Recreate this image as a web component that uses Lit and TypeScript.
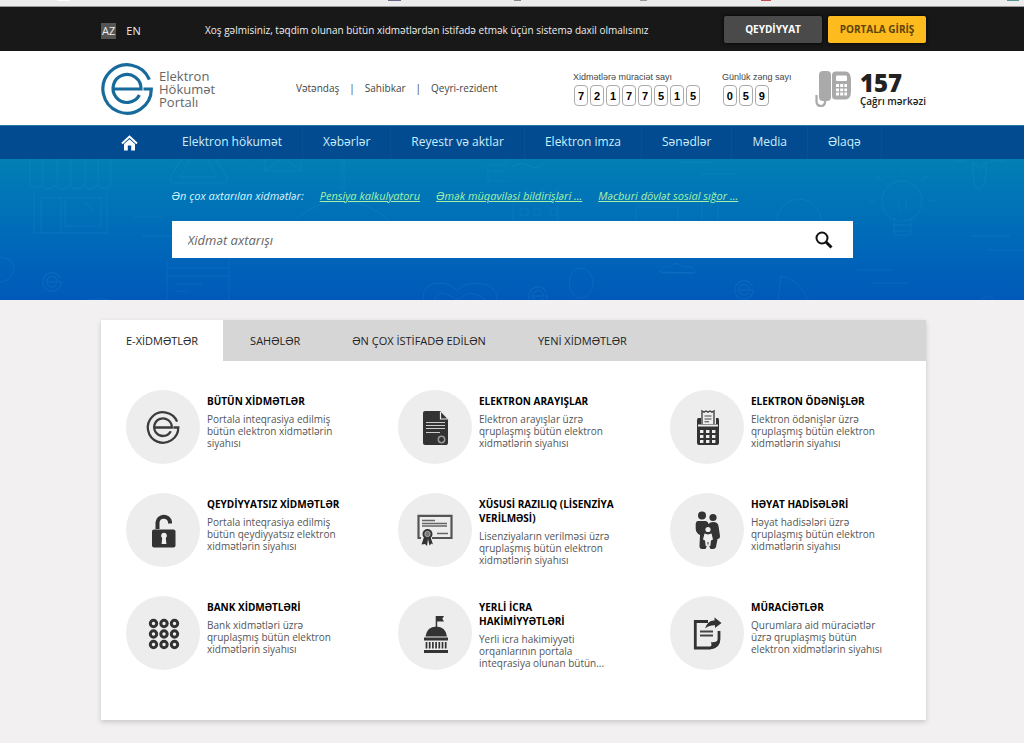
import { LitElement, html, svg, css } from 'lit';
import { customElement, state } from 'lit/decorators.js';
import { classMap } from 'lit/directives/class-map.js';

const emblem = svg`
  <path d="M22.4 -9.4A24.2 24.2 0 1 0 24.3 0H16.5" />
  <path d="M-14 0H14A14 14 0 1 0 12.4 6" />`;

const icons = {
  emblem: svg`<g transform="translate(37 37.5) scale(.63)" fill="none" stroke="#3c3c3c" stroke-width="3.6">${emblem}</g>`,
  doc: svg`
    <path d="M27 21H42L50 29.500V53Q50 55 48 55H27Q25 55 25 53V23Q25 21 27 21Z" fill="#333" />
    <path d="M42.500 22V29H49.500" fill="none" stroke="#eee" stroke-width="1.2" />
    <path d="M28 32.500H47M28 35.500H47M28 38.500H47M28 42.500H42" stroke="#ccc" stroke-width="1.200" />
    <circle cx="43.500" cy="49.500" r="3.200" fill="none" stroke="#999" stroke-width="1.500" />`,
  pay: svg`
    <path d="M28.500 28H31V34H46V28H48Q49 28 49 30V53Q49 55 47 55H29Q27 55 27 53V30Q27 28 28.500 28Z" fill="#333" />
    <path d="M32 34V21L34 22.200 36 21 38 22.200 40 21 42 22.200 44 21V34" fill="#eee" stroke="#444" stroke-width="1.400" />
    <path d="M34.500 26H41.500M34.500 29H41.500M34.500 31.800H39" stroke="#444" stroke-width="1.100" />
    <path d="M28 35.500H48" stroke="#eee" stroke-width="2" />
    <g fill="#eee">
      <rect x="30" y="40" width="3.400" height="3" /><rect x="36" y="40" width="3.400" height="3" /><rect x="42" y="40" width="3.400" height="3" />
      <rect x="30" y="45" width="3.400" height="3" /><rect x="36" y="45" width="3.400" height="3" /><rect x="42" y="45" width="3.400" height="3" />
      <rect x="30" y="50" width="3.400" height="3" /><rect x="36" y="50" width="3.400" height="3" /><rect x="42" y="50" width="3.400" height="3" />
    </g>`,
  lock: svg`
    <path d="M31.500 36V29.500A6.300 6.300 0 0 1 44 29V30.500" fill="none" stroke="#333" stroke-width="4" />
    <rect x="26" y="36.500" width="23.500" height="18" rx="2" fill="#333" />
    <path d="M38 39.800A2.900 2.900 0 0 1 39.800 45L40.400 51H35.600L36.200 45A2.900 2.900 0 0 1 38 39.800Z" fill="#eee" />`,
  license: svg`
    <path d="M23 45H20.500V22.800H53.500V45H34" fill="none" stroke="#555" stroke-width="2.200" />
    <path d="M24 27.500H37M24 30.500H49M24 33H49M39 40.500H50" stroke="#666" stroke-width="1.500" />
    <path d="M26 44L23.500 51.500 27 51 29 53 30 46 31.500 52.500 33.500 50.500 35 51.500 32.500 44Z" fill="#333" />
    <circle cx="29.500" cy="41" r="5" fill="#333" />
    <circle cx="29.500" cy="41" r="2.700" fill="#777" stroke="#bbb" stroke-width=".8" />`,
  family: svg`
    <circle cx="32" cy="22.500" r="4" fill="#333" /><circle cx="43" cy="24.500" r="3.600" fill="#333" />
    <path d="M28 28H35Q38 28 38.500 31Q40 29 43 29Q48 29 48.500 33L50 43Q50 46 47.500 46L46 54Q45.500 56 43 56H40.500L38 50.500 35.500 56H32Q29.500 56 29.500 53L30 42Q26 40 25.700 36V31Q26 28 28 28Z" fill="#333" />
    <circle cx="38" cy="36.500" r="2.600" fill="#eee" />
    <path d="M34.500 40.500L38 41.500 41.500 40.500 43 46.500 41 47.500 40.300 53H38.500V49H37.500V53H35.700L35 47.500 33 46.500Z" fill="#eee" />`,
  bank: svg`<g fill="#eee" stroke="#333" stroke-width="3">
    ${[27.5, 38, 48.5].map(y => [27.5, 38, 48.5].map(x => svg`<circle cx=${x} cy=${y} r="3.200" />`))}</g>`,
  dome: svg`
    <path d="M37.700 31V20H46L44.300 22.800 46 25.500H39.200V31" fill="#333" />
    <path d="M27.500 40.500Q29 30.500 38.300 30.500Q47.500 30.500 49 40.500Z" fill="#333" />
    <path d="M26 43H50M26 55.500H50" stroke="#333" stroke-width="2.800" />
    <path d="M28.500 46V52.500M31.700 46V52.500M34.900 46V52.500M38.100 46V52.500M41.300 46V52.500M44.500 46V52.500M47.700 46V52.500" stroke="#333" stroke-width="1.700" />`,
  letter: svg`
    <path d="M38 25.500H25.300V52H40Q49 51 49 43V35" fill="none" stroke="#333" stroke-width="2.800" />
    <path d="M49 43Q46 47 41 46Q42.500 50 39 53Q50 53 49 43Z" fill="#333" />
    <path d="M30 35.500H43M30 39.500H43" stroke="#444" stroke-width="1.800" />
    <path d="M35 32.500Q38 24 44.500 24.500V21.500L51.500 27 45 32V29.200Q39.500 29 35 32.500Z" fill="#333" />`,
};

const services: { title: string; text: string; icon: keyof typeof icons }[] = [
  { title: 'BÜTÜN XİDMƏTLƏR', text: 'Portala inteqrasiya edilmiş bütün elektron xidmətlərin siyahısı', icon: 'emblem' },
  { title: 'ELEKTRON ARAYIŞLAR', text: 'Elektron arayışlar üzrə qruplaşmış bütün elektron xidmətlərin siyahısı', icon: 'doc' },
  { title: 'ELEKTRON ÖDƏNİŞLƏR', text: 'Elektron ödənişlər üzrə qruplaşmış bütün elektron xidmətlərin siyahısı', icon: 'pay' },
  { title: 'QEYDİYYATSIZ XİDMƏTLƏR', text: 'Portala inteqrasiya edilmiş bütün qeydiyyatsız elektron xidmətlərin siyahısı', icon: 'lock' },
  { title: 'XÜSUSİ RAZILIQ (LİSENZİYA VERİLMƏSİ)', text: 'Lisenziyaların verilməsi üzrə qruplaşmış bütün elektron xidmətlərin siyahısı', icon: 'license' },
  { title: 'HƏYAT HADİSƏLƏRİ', text: 'Həyat hadisələri üzrə qruplaşmış bütün elektron xidmətlərin siyahısı', icon: 'family' },
  { title: 'BANK XİDMƏTLƏRİ', text: 'Bank xidmətləri üzrə qruplaşmış bütün elektron xidmətlərin siyahısı', icon: 'bank' },
  { title: 'YERLİ İCRA HAKİMİYYƏTLƏRİ', text: 'Yerli icra hakimiyyəti orqanlarının portala inteqrasiya olunan bütün...', icon: 'dome' },
  { title: 'MÜRACİƏTLƏR', text: 'Qurumlara aid müraciətlər üzrə qruplaşmış bütün elektron xidmətlərin siyahısı', icon: 'letter' },
];

const menu = ['Elektron hökumət', 'Xəbərlər', 'Reyestr və aktlar', 'Elektron imza', 'Sənədlər', 'Media', 'Əlaqə'];
const tabs = ['E-XİDMƏTLƏR', 'SAHƏLƏR', 'ƏN ÇOX İSTİFADƏ EDİLƏN', 'YENİ XİDMƏTLƏR'];

// Faint line drawings behind the search form.
const miniEmblem = (x: number, y: number) =>
  svg`<g transform="translate(${x} ${y}) scale(.38)" stroke-width="3.500">${emblem}</g>`;
const heroArt = svg`
  <path d="M30 0V24Q34 32 41 26Q48 34 55 26Q62 34 69 26Q76 34 83 26Q90 34 97 26Q105 34 111 24V0M43 0V26M57 0V26M71 0V26M85 0V26M98 0V26" />
  <path d="M34 31V74H107V31M41 74V39H61V74M65 39H101V67H65ZM84 43L94 51" />
  <path d="M182 0L170 18Q169 24 175 24H222Q229 24 227 18L216 0M190 0L180 18H216L208 0" />
  <path d="M265 0V12H301V0M265 12L279 2M301 12L288 2" />
  <path d="M341 0V32M344 0V32M296 60Q316 42 341 42Q368 42 390 62" />
  <path d="M134 58H162M142 77H172" />
  <path d="M0 98Q14 99 14 110Q12 122 0 123" />
  <path d="M167 100V141M229 100V141M167 109H229M167 117H229M175 125H202M175 132H186M87 141Q98 138 110 141" />
  <path d="M423 141Q422 124 441 124Q450 124 457 132Q464 124 478 124Q498 126 497 141M434 141Q438 131 446 135L458 141Q470 128 486 141" />
  <path d="M488 6H506V0M488 6V22H506M490 12H505" />
  <path d="M512 8Q520 2 530 7T545 2M681 3H712M700 15H736" />
  <path d="M513 62V42L528 30V42L543 30V42L558 30V62H513M520 50H528V56H520ZM534 50H540V56H534ZM550 50H557V56H550Z" />
  <path d="M636 62V48H678V62M702 62V40H718V62" />
  <path d="M777 62A22 22 0 0 1 821 62Z" />
  <path d="M660 113Q661 106 670 108Q676 101 683 108Q695 106 695 114ZM662 114H694" />
  <ellipse cx="581" cy="124" rx="12" ry="15" />
  <path d="M778 141L781 117Q800 121 808 141M857 111H893M872 124H909" />
  <circle cx="902" cy="42" r="20" />
  <path d="M894 59V76H911V59M894 66H911M894 72H911M899 52V40H897M906 52V40H908M902 16V10M882 22L877 17M922 22L927 17M876 42H868M928 42H936" />
  <path d="M973 3Q972 30 979 29Q987 30 986 3L980 10ZM954 3Q960 0 966 3M990 3Q1000 0 1006 3" />
  <path d="M970 77H1010M988 91H1024M980 141Q984 137 992 138V141" />
  ${miniEmblem(52, 123)}${miniEmblem(538, 137)}${miniEmblem(744, 131)}`;

@customElement('app-root')
export class AppRoot extends LitElement {
  @state() private active = 0;

  static styles = css`
    :host { display: block; min-height: 100vh; background: #f2f0f1; color: #444; font: 10px/12px "Open Sans", sans-serif; }
    * { box-sizing: border-box; }
    a { color: inherit; text-decoration: none; }
    button { font: inherit; border: 0; cursor: pointer; padding: 0; }
    svg { display: block; }
    .band { padding-left: 3px; }
    .wrap { max-width: 825px; margin: 0 auto; }
    .edge { height: 7px; background: #ececec; border-bottom: 1px solid #999; }
    .top { background: #181818; color: #eee; }
    .top .wrap { display: flex; height: 44px; align-items: center; }
    .langs { display: flex; gap: 9px; width: 104px; padding-top: 4px; font-size: 11px; line-height: 16px; }
    .langs a { padding: 0 1px; }
    .langs .on { background: #555; }
    .hello { flex: 1; white-space: nowrap; padding-top: 2px; }
    .actions { display: flex; gap: 6px; }
    .btn { width: 98px; height: 27px; border-radius: 2px; font-weight: 700; background: #4a4a4a; color: #fff; box-shadow: 0 0 4px #000; }
    .btn.login { background: #febb1e; color: #5c430b; }
    .head { background: #fff; }
    .head .wrap { display: grid; grid-template-columns: 195fr 277fr 149fr 93fr 111fr; height: 74px; align-items: center; }
    .logo { display: flex; align-items: center; gap: 6px; padding-top: 2px; font-size: 13px; line-height: 13px; color: #666; }
    .roles { display: flex; gap: 10px; color: #444; }
    .stat { font: 9px/12px "Liberation Sans", sans-serif; }
    .digits { display: flex; gap: 2px; margin-top: 2px; padding-left: 1px; }
    .digits b { width: 14px; height: 21px; border: 1px solid #aaa; border-radius: 4px; font-size: 11px; line-height: 20px; text-align: center; color: #000; }
    .call { display: flex; gap: 9px; align-items: center; padding-top: 2px; color: #222; white-space: nowrap; }
    .call div { font-weight: 600; }
    .call strong { display: block; font-size: 24px; line-height: 24px; }
    .nav { background: #024b90; border-top: 1px solid #2b76a8; color: #cdeefc; }
    .nav .wrap { display: flex; height: 33px; align-items: stretch; font-size: 12px; line-height: 32px; }
    .nav a { padding: 0 20px; white-space: nowrap; border-right: 1px solid #0a5194; }
    .nav .home { display: flex; align-items: center; padding: 0 24px 0 20px; border: 0; }
    .hero { position: relative; height: 141px; padding-top: 29px; background: linear-gradient(#027fb4, #006cb9 50%, #0059b9); overflow: hidden; }
    .art { position: absolute; inset: 0; width: 100%; height: 100%; }
    .find { position: relative; max-width: 681px; margin: 0 auto; }
    .popular { display: flex; gap: 16px; font-size: 11px; line-height: 16px; font-style: italic; color: #d6f5ff; white-space: nowrap; }
    .popular a { color: #a5f0a8; text-decoration: underline; }
    .search { display: flex; height: 37px; margin-top: 17px; background: #fff; }
    .search input { flex: 1; min-width: 0; border: 0; outline: 0; padding: 0 16px; background: none; font: italic 13px "Open Sans", sans-serif; color: #333; }
    .search input::placeholder { color: #666; opacity: 1; }
    .search button { width: 58px; background: none; display: grid; place-items: center; }
    .main { padding-top: 20px; padding-bottom: 23px; }
    .panel { background: #fff; box-shadow: 0 2px 5px #c8c6c7; }
    .tabs { display: flex; gap: 2px; height: 41px; background: #d6d6d6; }
    .tabs button { padding: 0 25px; background: none; font-size: 11px; color: #222; white-space: nowrap; }
    .tabs .on { background: #fff; }
    .grid { display: grid; grid-template-columns: repeat(3, 221px); grid-auto-rows: 74px; row-gap: 29px; justify-content: space-between; padding: 29px 35px 50px 25px; }
    .card { display: flex; gap: 7px; }
    .disc { flex: none; width: 74px; height: 74px; border-radius: 50%; background: #ededed; }
    .info { padding-top: 4px; width: 138px; }
    h2 { margin: 0 0 5px; font-size: 10px; line-height: 14px; font-weight: 700; color: #000; }
    p { margin: 0; color: #555; }
  `;

  private digits(label: string, value: string) {
    return html`<div class="stat">${label}<div class="digits">${[...value].map(d => html`<b>${d}</b>`)}</div></div>`;
  }

  render() {
    return html`
      <svg class="edge" width="100%" viewBox="0 0 1024 7" preserveAspectRatio="none" aria-hidden="true">
        <rect x="57" width="13" height="1" fill="#fff" /><rect x="388" width="13" height="1" fill="#557" />
        <rect x="514" width="7" height="1" fill="#777" /><rect x="640" width="7" height="1" fill="#888" />
        <rect x="761" width="10" height="1" fill="#b33" /><rect x="1007" width="12" height="1" fill="#3b8686" />
      </svg>
      <div class="top band"><div class="wrap">
        <div class="langs"><a class="on" href="#az">AZ</a><a href="#en">EN</a></div>
        <div class="hello">Xoş gəlmisiniz, təqdim olunan bütün xidmətlərdən istifadə etmək üçün sistemə daxil olmalısınız</div>
        <div class="actions"><button class="btn">QEYDİYYAT</button><button class="btn login">PORTALA GİRİŞ</button></div>
      </div></div>
      <header class="head band"><div class="wrap">
        <a class="logo" href="#">
          <svg width="52" height="52" viewBox="-26 -26 52 52" fill="none" stroke="#176a9c" stroke-width="3.200">${emblem}</svg>
          <span>Elektron<br />Hökumət<br />Portalı</span>
        </a>
        <div class="roles"><a href="#">Vətəndaş</a><span>|</span><a href="#">Sahibkar</a><span>|</span><a href="#">Qeyri-rezident</a></div>
        ${this.digits('Xidmətlərə müraciət sayı', '72177515')}
        ${this.digits('Günlük zəng sayı', '059')}
        <div class="call">
          <svg width="36" height="37" viewBox="0 0 36 37">
            <rect x="4" y="0" width="12" height="30" rx="4" fill="#aaa" />
            <path d="M10 28V31.500Q9.500 35 6 35Q2 35 1.500 31V24" fill="none" stroke="#aaa" stroke-width="2.200" />
            <path d="M20 .5H31Q36 1 36 9V20Q36 28 31 28.500H20Q17 28 17 25V4Q17 1 20 .5Z" fill="#aaa" />
            <rect x="21" y="4.500" width="11" height="5.500" rx="1" fill="#fff" />
            <path d="M21 14.500H32M21 18.800H32M21 23H32" stroke="#fff" stroke-width="2.800" stroke-dasharray="3 1.200" />
          </svg>
          <div><strong>157</strong>Çağrı mərkəzi</div>
        </div>
      </div></header>
      <nav class="nav band"><div class="wrap">
        <a class="home" href="#" aria-label="Home">
          <svg width="17" height="16" viewBox="0 0 17 16"><path d="M1 8.500L8.500 1.500 16 8.500" fill="none" stroke="#fff" stroke-width="2" /><path d="M3 9L8.500 4.200 14 9V15.500H10.200V10.500H6.800V15.500H3Z" fill="#fff" /></svg>
        </a>
        ${menu.map(m => html`<a href="#">${m}</a>`)}
      </div></nav>
      <section class="hero">
        <svg class="art" viewBox="0 0 1024 141" preserveAspectRatio="xMidYMin slice" fill="none" stroke="#49b4e6" stroke-opacity=".13" stroke-width="1" aria-hidden="true">${heroArt}</svg>
        <div class="find">
          <div class="popular"><span>Ən çox axtarılan xidmətlər:</span><a href="#">Pensiya kalkulyatoru</a><a href="#">Əmək müqaviləsi bildirişləri ...</a><a href="#">Məcburi dövlət sosial sığor ...</a></div>
          <form class="search" @submit=${(e: Event) => e.preventDefault()}>
            <input type="text" aria-label="Xidmət axtarışı" placeholder="Xidmət axtarışı" />
            <button aria-label="Axtar"><svg width="18" height="18" viewBox="0 0 18 18" fill="none" stroke="#111"><circle cx="7" cy="7" r="5.500" stroke-width="2" /><path d="M11 11L16.500 16.500" stroke-width="3" /></svg></button>
          </form>
        </div>
      </section>
      <main class="main band"><div class="wrap panel">
        <div class="tabs" role="tablist">
          ${tabs.map((t, i) => html`<button role="tab" aria-selected=${i === this.active} class=${classMap({ on: i === this.active })} @click=${() => (this.active = i)}>${t}</button>`)}
        </div>
        <div class="grid">
          ${services.map(s => html`<a class="card" href="#">
            <svg class="disc" viewBox="0 0 74 74" aria-hidden="true">${icons[s.icon]}</svg>
            <div class="info"><h2>${s.title}</h2><p>${s.text}</p></div>
          </a>`)}
        </div>
      </div></main>`;
  }
}
